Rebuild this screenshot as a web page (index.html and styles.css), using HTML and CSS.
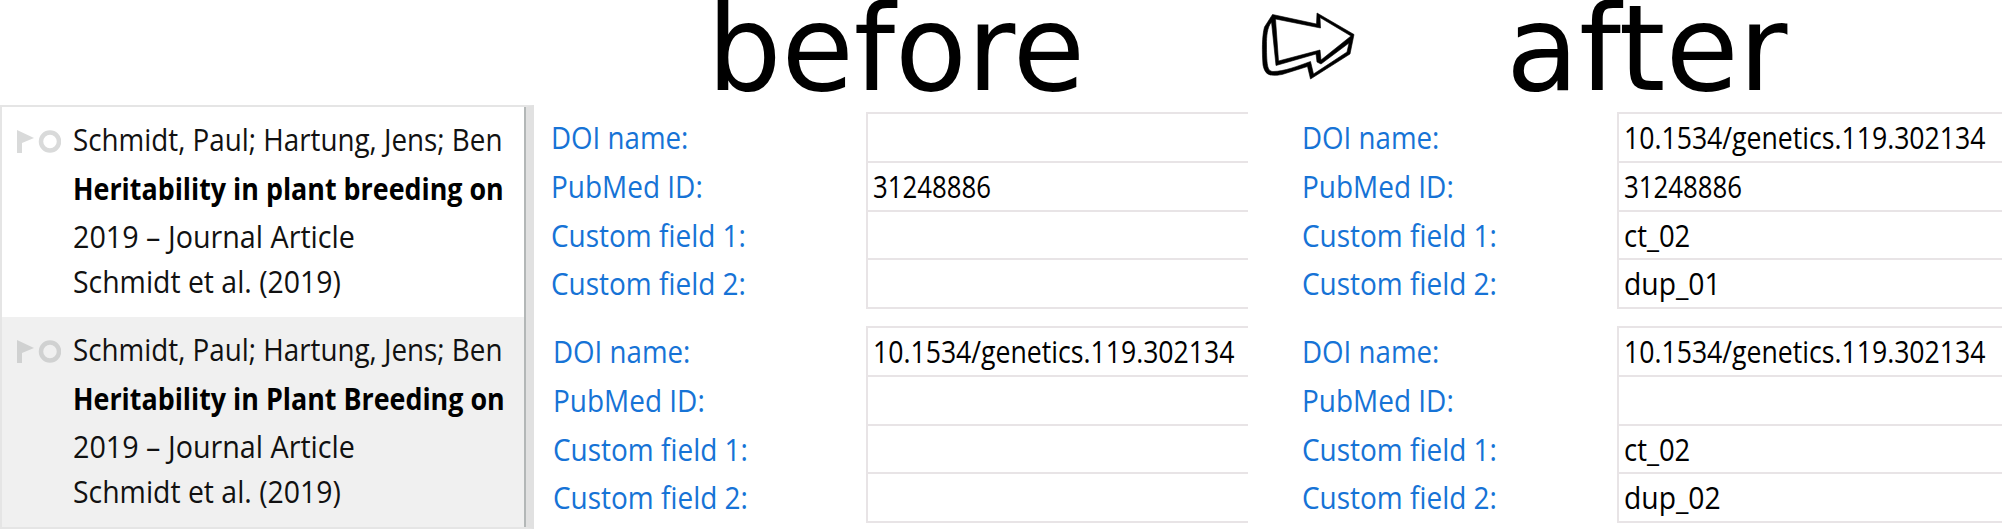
FILE: index.html
```
<!DOCTYPE html>
<html lang="en">
<head>
<meta charset="utf-8">
<title>Before and after</title>
<link rel="stylesheet" href="styles.css">
</head>
<body>
<header class="header">
  <h1 class="title title-before">before</h1>
  <svg class="arrow" width="100" height="90" viewBox="0 0 100 90">
    <path fill="#000" stroke="#000" stroke-width=".6" fill-rule="evenodd" d="M12.500 14.500L56.500 24L57 13L94 34.500L90 54L50.500 79L47.500 66.500L22 74.500C8 77 5 74 3 65C2 52 2 36 4.500 27ZM15.500 19L18.500 61L60 50L61 60L91 36L60 17.500L60.500 28ZM11.500 22C7 28 6.500 36 6.500 45C6.500 68 8 71 13 71.500C24 71.500 38 66 50.500 61.500L53.500 74L87 52L89 43L61 64L57 62L56 54L16 65.500Z"/>
  </svg>
  <h1 class="title title-after">after</h1>
</header>
<main class="content">
  <section class="list">
    <article class="item">
      <svg class="marks" width="46" height="26" viewBox="0 0 46 26"><path fill="#d9dada" d="M2 2L19 10L7 15V25H2Z"/><circle cx="35" cy="13.500" r="9" fill="none" stroke="#d9dada" stroke-width="4.500"/></svg>
      <div class="lines">
        <p class="line author"><span>Schmidt, Paul; Hartung, Jens; Ben</span></p>
        <p class="line name"><span>Heritability in plant breeding on</span></p>
        <p class="line kind"><span>2019 – Journal Article</span></p>
        <p class="line cite"><span>Schmidt et al. (2019)</span></p>
      </div>
    </article>
    <article class="item selected">
      <svg class="marks" width="46" height="26" viewBox="0 0 46 26"><path fill="#d0d1d1" d="M2 2L19 10L7 15V25H2Z"/><circle cx="35" cy="13.500" r="9" fill="none" stroke="#d0d1d1" stroke-width="4.500"/></svg>
      <div class="lines">
        <p class="line author"><span>Schmidt, Paul; Hartung, Jens; Ben</span></p>
        <p class="line name"><span>Heritability in Plant Breeding on</span></p>
        <p class="line kind"><span>2019 – Journal Article</span></p>
        <p class="line cite"><span>Schmidt et al. (2019)</span></p>
      </div>
    </article>
  </section>
  <section class="panel before">
    <div class="fields">
      <div class="label"><span class="doi">DOI name:</span></div><div class="value"></div>
      <div class="label"><span>PubMed ID:</span></div><div class="value"><span class="digits">31248886</span></div>
      <div class="label"><span>Custom field 1:</span></div><div class="value"></div>
      <div class="label"><span>Custom field 2:</span></div><div class="value"></div>
    </div>
    <div class="fields shifted">
      <div class="label"><span class="doi">DOI name:</span></div><div class="value"><span class="number">10.1534/genetics.119.302134</span></div>
      <div class="label"><span>PubMed ID:</span></div><div class="value"></div>
      <div class="label"><span>Custom field 1:</span></div><div class="value"></div>
      <div class="label"><span>Custom field 2:</span></div><div class="value"></div>
    </div>
  </section>
  <section class="panel after">
    <div class="fields">
      <div class="label"><span class="doi">DOI name:</span></div><div class="value"><span class="number">10.1534/genetics.119.302134</span></div>
      <div class="label"><span>PubMed ID:</span></div><div class="value"><span class="digits">31248886</span></div>
      <div class="label"><span>Custom field 1:</span></div><div class="value"><span class="code">ct_02</span></div>
      <div class="label"><span>Custom field 2:</span></div><div class="value"><span>dup_01</span></div>
    </div>
    <div class="fields">
      <div class="label"><span class="doi">DOI name:</span></div><div class="value"><span class="number">10.1534/genetics.119.302134</span></div>
      <div class="label"><span>PubMed ID:</span></div><div class="value"></div>
      <div class="label"><span>Custom field 1:</span></div><div class="value"><span class="code">ct_02</span></div>
      <div class="label"><span>Custom field 2:</span></div><div class="value"><span>dup_02</span></div>
    </div>
  </section>
</main>
</body>
</html>
```
FILE: styles.css
```
* { box-sizing: border-box; }
body {
  margin: 0;
  width: 2009px;
  height: 529px;
  overflow: hidden;
  background: #fff;
  color: #111;
  font: 31px "Open Sans", "Noto Sans", sans-serif;
}
p, h1 { margin: 0; }
span {
  display: inline-block;
  white-space: nowrap;
  transform-origin: 0 50%;
}

/* Headings */
.header { display: flex; height: 105px; }
.title {
  color: #000;
  font: 119px/98px "DejaVu Sans", sans-serif;
  transform-origin: 0 50%;
}
.title-before { width: 552px; padding-left: 7px; margin-left: 700px; transform: scaleX(.987); }
.title-after { margin-left: 146px; }
.arrow { flex: none; margin-left: 8px; }

/* Reference list */
.content { display: flex; height: 424px; }
.list {
  flex: none;
  width: 534px;
  border: 2px solid #e5e5e5;
  border-right: 8px solid #e1e1e1;
  box-shadow: inset -2px 0 #b3b7b7;
}
.item { display: flex; height: 210px; margin-right: 2px; padding: 8px 0 0 13px; }
.selected { background: #f0f0f0; }
.marks { flex: none; margin: 13px 12px 0 0; }
.line { height: 48px; line-height: 49px; }
.author span { transform: scaleX(.896); }
.name { height: 49px; line-height: 51px; color: #000; font-weight: 700; }
.name span { transform: scaleX(.866); }
.kind span { transform: scaleX(.926); }
.cite { height: 40px; line-height: 42px; }
.cite span { transform: scaleX(.916); }

/* Field tables */
.panel { display: flex; flex: none; flex-direction: column; gap: 17px; padding-top: 7px; }
.before { width: 714px; padding-left: 17px; }
.after { width: 754px; padding-left: 54px; }
.fields {
  display: grid;
  grid-template-columns: 315px minmax(0, 1fr);
  grid-template-rows: repeat(3, 48.75px) 50.75px;
}
.label { color: #1673d6; line-height: 51px; }
.label span { transform: scaleX(.902); }
.label .doi { transform: scaleX(.893); }
.shifted .label { padding-left: 2px; }
.value {
  padding-left: 5px;
  border: solid #e8e4e6;
  border-width: 2px 0 0 2px;
  line-height: 47px;
  color: #000;
}
.value:last-child { border-bottom-width: 2px; }
.value span { transform: scaleX(.912); }
.value .code { transform: scaleX(.885); }
.value .digits { transform: scaleX(.832); }
.value .number { transform: scaleX(.859); }
```
